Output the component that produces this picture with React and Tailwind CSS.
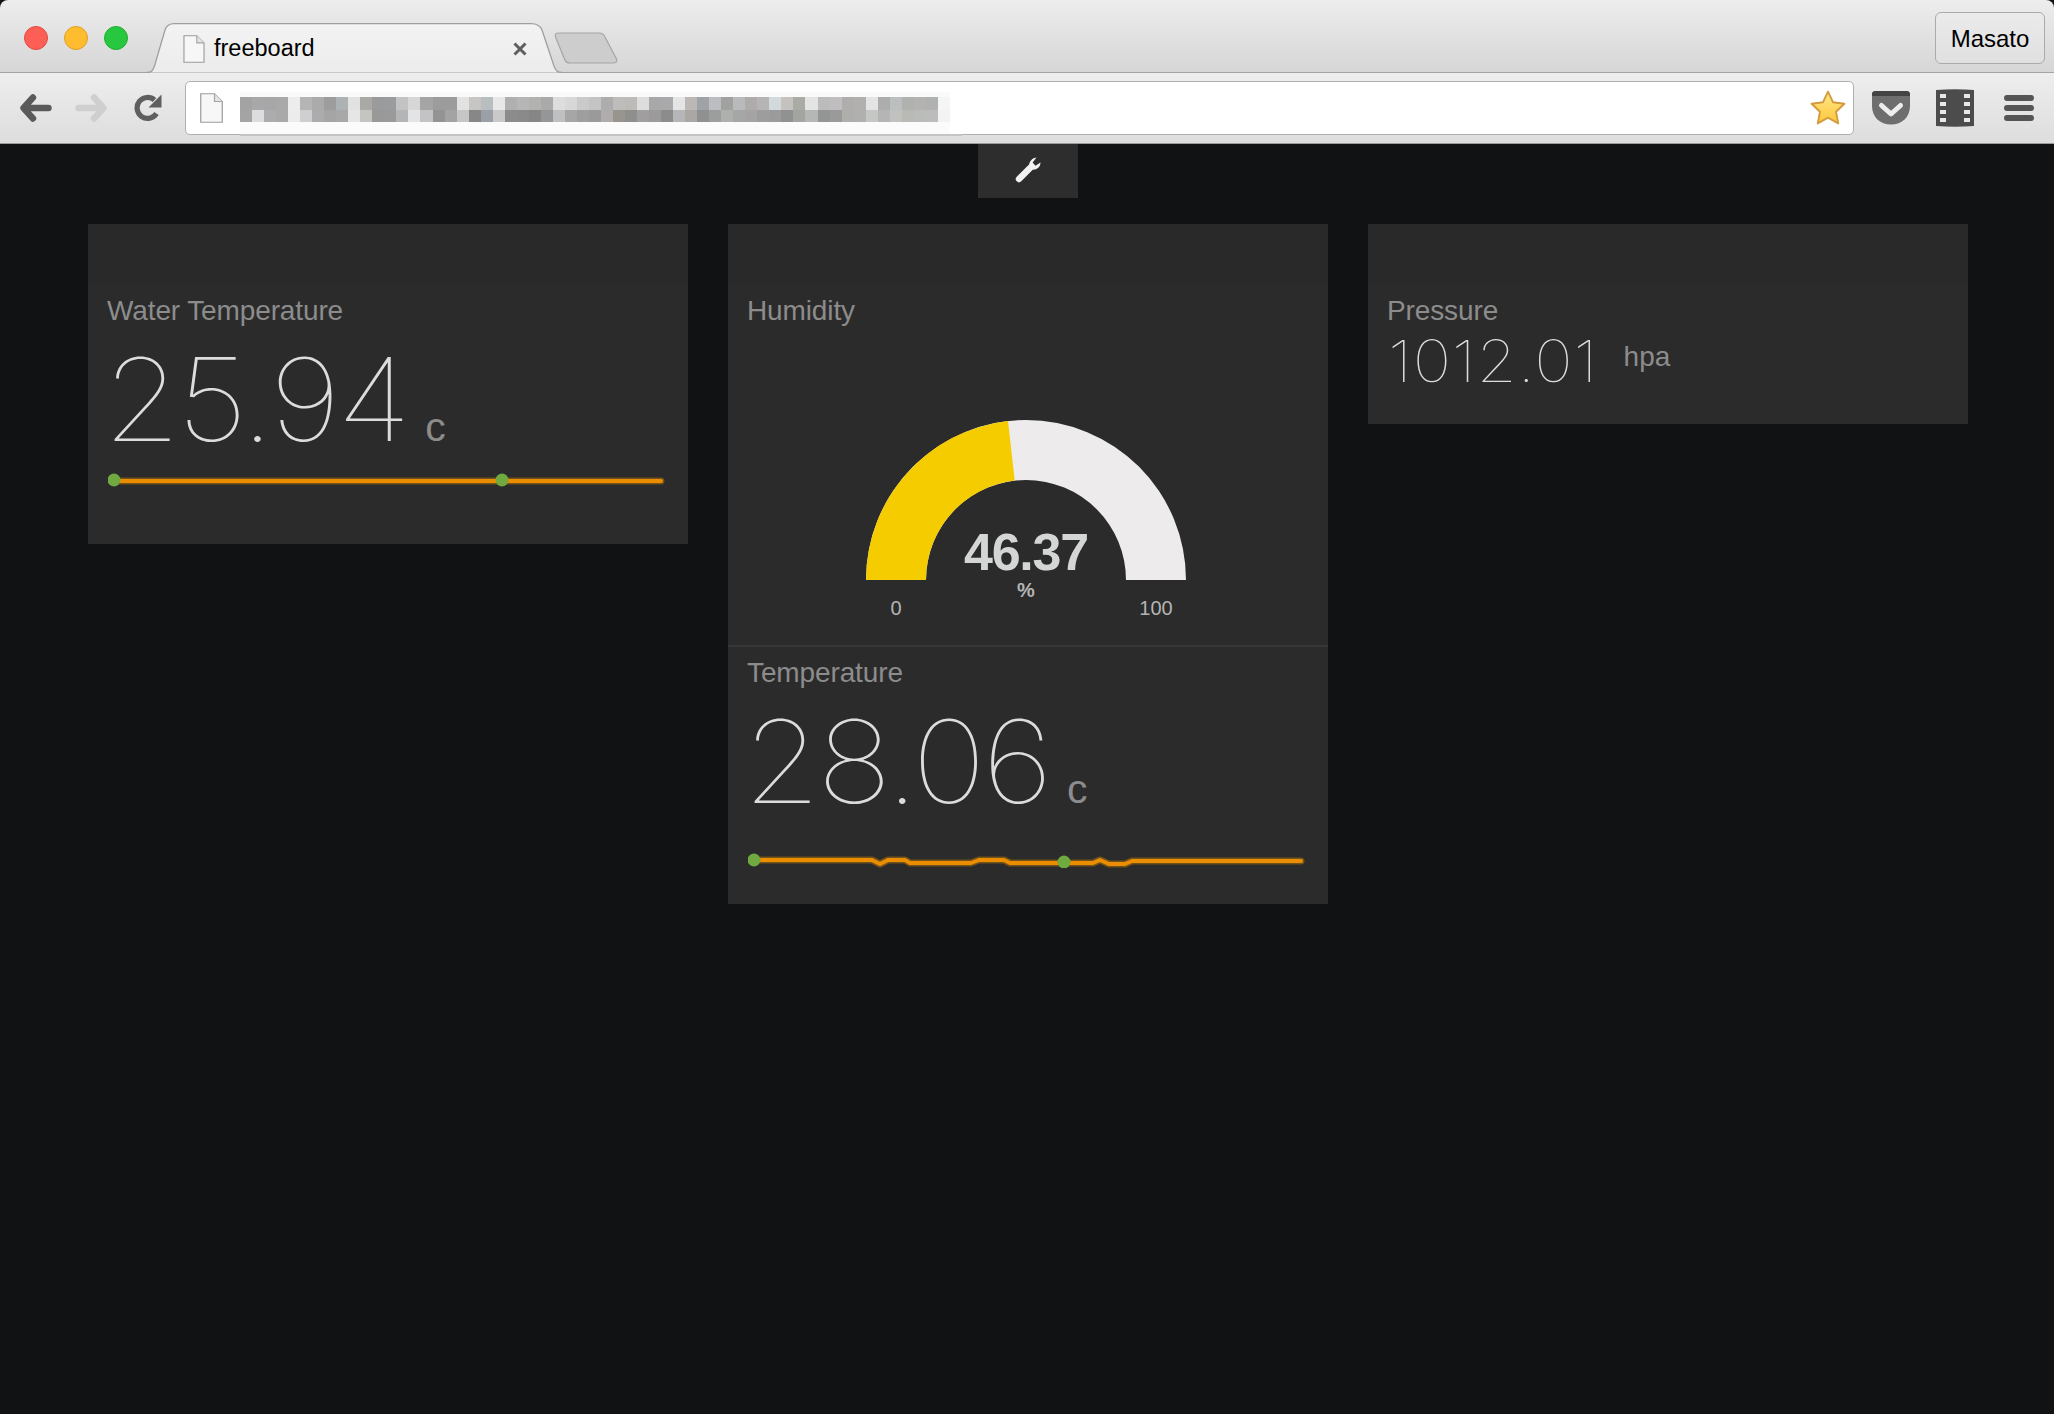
import React from "react";

const row1 = ["a3a3a3","a6a8aa","a7a7a7","a9a9a9","ededed","b5b5b6","acabab","9e9d9e","adb2b5","e2e2e2","aba9a5","999b9c","9b9c9e","c3c3c3","d7d7d7","a5a5a6","9c9c9c","9c9c9c","e2e2e2","c8c6c4","b8bdc0","e8e8e8","b0b0b0","b6b6b6","b2b2b0","aaaaaa","dddddd","d8d8d8","cacaca","c4c4c4","adadad","bebdbb","bcbbb8","dddddd","a9a7a7","aaa9ab","e4e6e6","bbb8b5","a0a3a5","bcbdc0","a1a19f","b8babc","aeabaa","b5b5b5","d3dadb","c5c2c0","a9aba5","e4e4e4","bcbcbc","c0bebe","b0aeac","b2b0ae","e4e4e4","adadad","bcbfc0","b0b2b0","b3b3b0","b0b2b2","f5f5f8"];
const row2 = ["a4a4a4","dddde0","acacac","a9a9a9","ececec","cfcfd1","acacac","a5a5a5","a8a8a8","e6e6e6","c4c4c0","999999","9a9a9a","b3b5b7","e4e4e4","c3c3c5","939393","a3a3a3","c6c6c6","878787","9aa0a5","c9c9c9","8c8c8c","8a8a8a","868686","959697","c0c0c0","a6a6a6","9e9e9e","9a9a9a","b0acad","98948e","8f908e","a09e9e","9b9b9b","8c8c8c","b6b6b8","aba7a5","8e9092","9c9e9e","aeb0ae","a5a7a7","a5a3a3","9d9d9d","9b9b9b","919191","a3a5a0","b5b7b7","949696","9a9a9a","aeaeaa","b0b0ae","c5c7c5","b5b5b5","c0c2c0","b9b9b6","b9bcb9","bcbcbc","f3f3f6"];

function Cells({ colors, className }) {
  return (
    <div className={`flex ${className}`}>
      {colors.map((c, i) => (
        <div key={i} className="flex-1" style={{ backgroundColor: `#${c}` }} />
      ))}
    </div>
  );
}

function FileIcon({ className }) {
  return (
    <svg className={className} viewBox="0 0 23 30" fill="none">
      <path d="M.75.75H14.5L22.25 8.5V29.25H.75Z" fill="#f7f7f7" stroke="#9b9b9b" strokeWidth="1.2" />
      <path d="M14.5.75V8.5H22.25" fill="#e4e4e4" stroke="#a5a5a5" strokeWidth="1.2" />
    </svg>
  );
}

function Spark({ points, dots }) {
  return (
    <svg className="block" width="560" height="30" viewBox="0 0 560 30" fill="none">
      <polyline points={points} stroke="#8f6414" strokeWidth="7" strokeLinejoin="round" strokeLinecap="round" opacity="0.7" />
      <polyline points={points} stroke="#ea8d00" strokeWidth="4" strokeLinejoin="round" strokeLinecap="round" />
      {dots.map(([x, y]) => (
        <circle key={x} cx={x} cy={y} r="6.5" fill="#6fa93f" />
      ))}
    </svg>
  );
}

function Label({ children }) {
  return <div className="-ml-px h-8 pt-px font-['Liberation_Sans',sans-serif] text-[28px] leading-8 text-[#8c8c8c] tracking-[-0.12px]">{children}</div>;
}

function BigValue({ value, unit }) {
  return (
    <div className="mt-[18px] -ml-[5px] flex h-[112px] items-baseline">
      <span className="inline-block origin-left scale-x-[1.09] font-['Inter',sans-serif] text-[115px] leading-[112px] font-thin tracking-[-3.5px] text-[#dcdcdc]">{value}</span>
      <span className="ml-[43px] font-['Liberation_Sans',sans-serif] text-[41px] leading-none text-[#8c8c8c]">{unit}</span>
    </div>
  );
}

function CardHead() {
  return <div className="h-[60px] bg-[#292929]" />;
}

export default function App() {
  return (
    <div className="flex min-h-[1414px] w-[2054px] flex-col overflow-hidden bg-[#101214] font-['Roboto',sans-serif]">
      {/* tab strip */}
      <div className="flex h-[73px] items-end rounded-t-[8px] border-b border-[#a3a3a3] bg-gradient-to-b from-[#ededed] to-[#d6d6d6]">
        <div className="flex gap-4 self-start pt-[26px] pl-6">
          <div className="h-6 w-6 rounded-full border border-[#e2493f] bg-[#fd5f57]" />
          <div className="h-6 w-6 rounded-full border border-[#dfa023] bg-[#febc2e]" />
          <div className="h-6 w-6 rounded-full border border-[#1fad2e] bg-[#27c83f]" />
        </div>
        <div className="relative -mb-px ml-[19px] flex h-[50px] w-[415px] items-center pt-[2px] pr-[35px] pl-[36px]">
          <svg className="absolute inset-0" width="415" height="50" viewBox="0 0 415 50" fill="none">
            <defs>
              <linearGradient id="tabg" x1="0" y1="0" x2="0" y2="1">
                <stop offset="0" stopColor="#f3f3f3" />
                <stop offset="1" stopColor="#ececec" />
              </linearGradient>
            </defs>
            <path d="M0 49.5C5 49.5 6 47 7.5 43L18 7C19.5 2.5 22 .7 27 .7H384C390 .7 393 2.5 395 7L407 43C408.5 47 410 49.5 415 49.5" fill="url(#tabg)" stroke="#9f9f9f" strokeWidth="1.3" />
          </svg>
          <FileIcon className="relative h-[28px] w-[22px] shrink-0" />
          <span className="relative ml-[9px] font-['Liberation_Sans',sans-serif] text-[23.5px] leading-none text-black">freeboard</span>
          <svg className="relative ml-auto" width="14" height="14" viewBox="0 0 14 14">
            <path d="M1.5 1.5L12.5 12.5M12.5 1.5L1.5 12.5" stroke="#5f5f5f" strokeWidth="3" />
          </svg>
        </div>
        <svg className="-ml-[8px] mb-[8px]" width="64" height="32" viewBox="0 0 64 32" fill="none">
          <path d="M5 1H45C48 1 50 2 51 5L62.5 27C63.5 30 62 31 59 31H16C13 31 11.5 30 10.5 27L1.5 5C.5 2 2 1 5 1Z" fill="#cdcdcd" stroke="#a5a5a5" strokeWidth="1.2" />
        </svg>
        <div className="ml-auto mr-[9px] mb-[8px] flex h-[52px] w-[110px] items-center justify-center rounded-[6px] border border-[#ababab] bg-gradient-to-b from-[#ebebeb] to-[#e0e0e0] pt-[2px] font-['Liberation_Sans',sans-serif] text-[24px] leading-none text-black">
          Masato
        </div>
      </div>

      {/* toolbar */}
      <div className="flex h-[71px] items-center border-b border-[#9c9c9c] bg-gradient-to-b from-[#eeeeee] to-[#dddddd] pr-[20px] pl-[20px]">
        <svg width="32" height="28" viewBox="0 0 32 28" fill="none">
          <path d="M13 3.5L3.5 14L13 24.5M4 14H28.5" stroke="#5a5a5a" strokeWidth="6.4" strokeLinecap="round" strokeLinejoin="round" />
        </svg>
        <svg className="ml-[23px]" width="32" height="28" viewBox="0 0 32 28" fill="none">
          <path d="M19 3.5L28.5 14L19 24.5M28 14H3.5" stroke="#cfcfcf" strokeWidth="6.4" strokeLinecap="round" strokeLinejoin="round" />
        </svg>
        <svg className="ml-[27px]" width="28" height="28" viewBox="0 0 28 28" fill="none">
          <path d="M22.5 19.5A10.5 10.5 0 1 1 20.5 6" stroke="#5f5f5f" strokeWidth="5.2" />
          <path d="M27.5 .5V13.5H14.5Z" fill="#5f5f5f" />
        </svg>
        <div className="ml-[23px] flex h-[54px] flex-1 items-start rounded-[5px] border border-[#b0b0b0] bg-white pr-[6px] pl-[14px]">
          <FileIcon className="mt-[11px] h-[30px] w-[23px] shrink-0" />
          <div className="relative mt-[10px] ml-[17px] w-[722px] shrink-0">
            <div className="w-[710px] blur-[0.7px]">
              <div className="h-[5px] bg-[#fafafa]" />
              <Cells colors={row1} className="h-[13px]" />
              <Cells colors={row2} className="h-[12px]" />
              <div className="h-[12px] bg-[#fbfbfb]" />
            </div>
            <div className="h-[2px] bg-[#c4c4c4]" />
          </div>
          <svg className="mt-[7px] ml-auto" width="38" height="38" viewBox="0 0 36 36">
            <defs>
              <linearGradient id="star" x1="0" y1="0" x2="0" y2="1">
                <stop offset="0" stopColor="#ffe98a" />
                <stop offset="1" stopColor="#fdc63a" />
              </linearGradient>
            </defs>
            <path d="M18 2.5L22.8 12.6L33.5 14L25.6 21.6L27.7 32.6L18 27.2L8.3 32.6L10.4 21.6L2.5 14L13.2 12.6Z" fill="url(#star)" stroke="#d39b3d" strokeWidth="1.8" strokeLinejoin="round" />
          </svg>
        </div>
        <svg className="ml-[18px]" width="38" height="36" viewBox="0 0 38 36">
          <path d="M0 5V16C0 27 8 34.5 19 34.5S38 27 38 16V5C38 2 37 1 34 1H4C1 1 0 2 0 5Z" fill="#6e6e6e" />
          <path d="M0 5C0 2 1 1 4 1H34C37 1 38 2 38 5V6H0Z" fill="#444444" />
          <path d="M9.5 15.5L19 24L28.5 15.5" fill="none" stroke="#eeeeee" strokeWidth="5" strokeLinecap="round" strokeLinejoin="round" />
        </svg>
        <svg className="ml-[26px]" width="38" height="38" viewBox="0 0 38 38">
          <path d="M0 1Q19 -.5 38 1V37Q19 38.5 0 37Z" fill="#4c4c4c" />
          {[5, 13, 21, 29].map((y) => (
            <React.Fragment key={y}>
              <rect x="4" y={y} width="6" height="4" fill="#e8e8e8" />
              <rect x="28" y={y} width="6" height="4" fill="#e8e8e8" />
            </React.Fragment>
          ))}
        </svg>
        <div className="ml-[30px] flex w-[30px] flex-col gap-1">
          <div className="h-[6px] rounded-full bg-[#555555]" />
          <div className="h-[6px] rounded-full bg-[#555555]" />
          <div className="h-[6px] rounded-full bg-[#555555]" />
        </div>
      </div>

      {/* wrench tab */}
      <div className="flex justify-center">
        <div className="ml-[2px] flex h-[54px] w-[100px] items-center justify-center bg-[#2d2d2d]">
          <svg className="-mt-[2px]" width="26" height="26" viewBox="0 0 26 26" fill="none">
            <path d="M4 22L15 11" stroke="#f2f2f2" strokeWidth="6.4" strokeLinecap="round" />
            <path d="M25.5 5.5C25.5 11 19.5 14.5 14.8 11.8C12.5 7.5 15.5 1 21.5 .5L17.6 5.6L20.5 8.8Z" fill="#f2f2f2" />
          </svg>
        </div>
      </div>

      {/* board */}
      <div className="mt-[26px] flex items-start gap-10 pl-[88px]">
        {/* col 1 */}
        <div className="w-[600px] bg-[#2b2b2b]">
          <CardHead />
          <div className="h-[260px] px-5 pt-[10px]">
            <Label>Water Temperature</Label>
            <BigValue value="25.94" unit="c" />
            <div className="mt-[3px]">
              <Spark points="6,22 553,22" dots={[[6, 21], [394, 21]]} />
            </div>
          </div>
        </div>

        {/* col 2 */}
        <div className="w-[600px] bg-[#2b2b2b]">
          <CardHead />
          <div className="h-[361px] px-5 pt-[10px]">
            <Label>Humidity</Label>
            <div className="mt-[94px] flex flex-col items-center pr-[4px]">
              <div className="relative h-[160px] w-[320px]">
                <svg className="absolute inset-0" width="320" height="160" viewBox="0 0 320 160">
                  <path d="M0 160A160 160 0 0 1 320 160H260A100 100 0 0 0 60 160Z" fill="#edebeb" />
                  <path d="M0 160A160 160 0 0 1 142 1L148.7 60.6A100 100 0 0 0 60 160Z" fill="#f4cc00" />
                </svg>
                <div className="absolute top-[104px] left-0 w-full text-center font-['Liberation_Sans',sans-serif] text-[52px] leading-[56px] font-bold tracking-[-1.2px] text-[#d4d6d6]">46.37</div>
                <div className="absolute top-[160px] left-0 w-full text-center font-['Liberation_Sans',sans-serif] text-[20px] leading-[20px] font-bold text-[#b4b4b4]">%</div>
              </div>
              <div className="mt-[18px] flex w-[320px] font-['Liberation_Sans',sans-serif] text-[20px] leading-5 text-[#b4b4b4]">
                <div className="w-[60px] text-center">0</div>
                <div className="ml-auto w-[60px] text-center">100</div>
              </div>
            </div>
          </div>
          <div className="h-[2px] bg-[#363636]" />
          <div className="h-[257px] px-5 pt-[9px]">
            <Label>Temperature</Label>
            <BigValue value="28.06" unit="c" />
            <div className="mt-[20px]">
              <Spark
                points="6,22 124,22 132,26 140,22 157,22 162,25 223,25 231,22 256,22 262,25 345,25 352,22 361,26 377,26 384,23 553,23"
                dots={[[6, 22], [316, 24]]}
              />
            </div>
          </div>
        </div>

        {/* col 3 */}
        <div className="w-[600px] bg-[#2b2b2b]">
          <CardHead />
          <div className="h-[140px] px-5 pt-[10px]">
            <Label>Pressure</Label>
            <div className="mt-[5px] flex h-[60px] items-baseline">
              <span className="inline-block origin-left scale-x-[1.12] font-['Inter',sans-serif] text-[58px] leading-[60px] font-thin tracking-[0.7px] text-[#dcdcdc]">1012.01</span>
              <span className="ml-[48px] -translate-y-[16px] font-['Liberation_Sans',sans-serif] text-[28px] leading-none text-[#8c8c8c]">hpa</span>
            </div>
          </div>
        </div>
      </div>
    </div>
  );
}
